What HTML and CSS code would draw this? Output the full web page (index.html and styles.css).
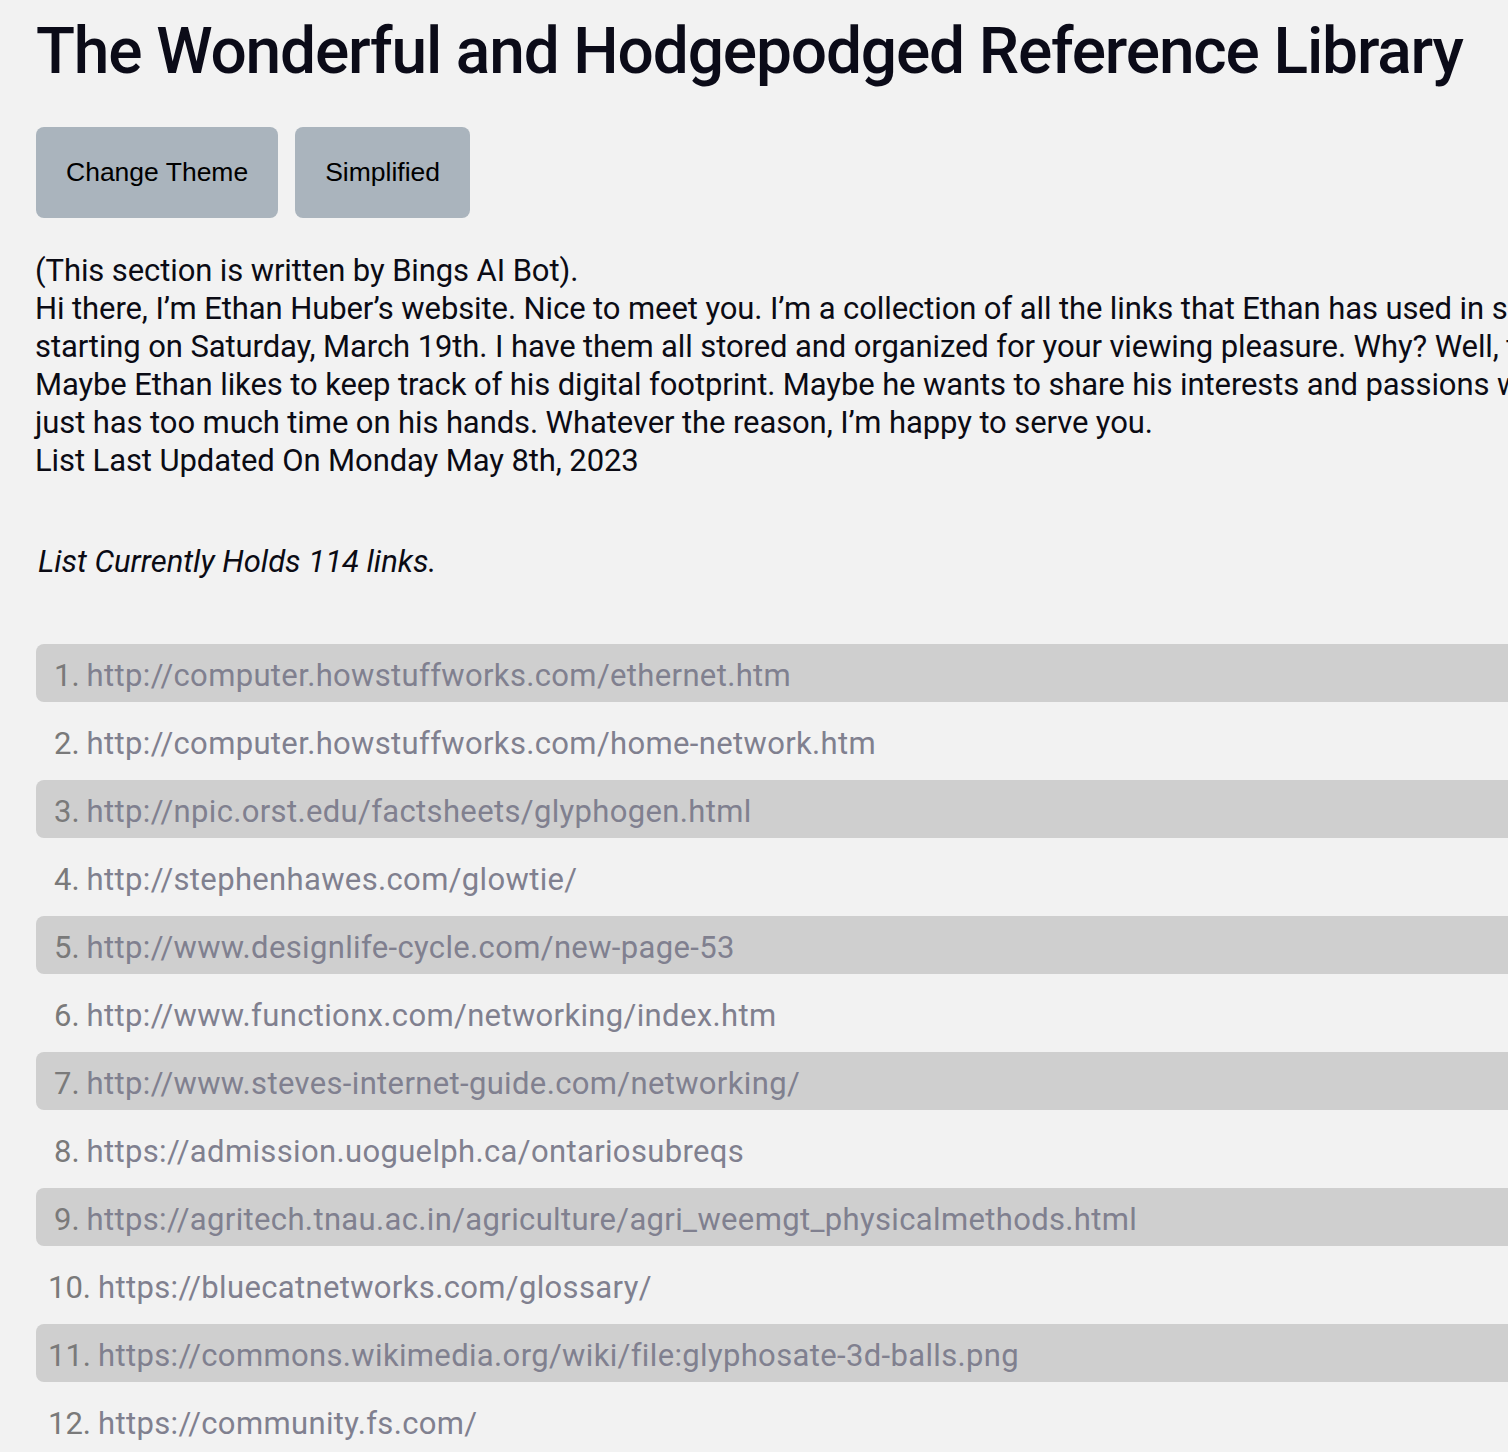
FILE: index.html
```html
<!DOCTYPE html>
<html lang="en">
<head>
<meta charset="utf-8">
<title>The Wonderful and Hodgepodged Reference Library</title>
<link rel="stylesheet" href="styles.css">
</head>
<body>
<div class="page">
  <h1 class="title">The Wonderful and Hodgepodged Reference Library</h1>
  <div class="actions">
    <button class="btn">Change Theme</button>
    <button class="btn">Simplified</button>
  </div>
  <p class="intro">(This section is written by Bings AI Bot).<br>Hi there, I’m Ethan Huber’s website. Nice to meet you. I’m a collection of all the links that Ethan has used in school,<br>starting on Saturday, March 19th. I have them all stored and organized for your viewing pleasure. Why? Well, that’s a good question.<br>Maybe Ethan likes to keep track of his digital footprint. Maybe he wants to share his interests and passions with the world. Or maybe he<br>just has too much time on his hands. Whatever the reason, I’m happy to serve you.<br>List Last Updated On Monday May 8th, 2023</p>
  <p class="count">List Currently Holds 114 links.</p>
  <ol class="links">
    <li class="row row--alt"><span class="num">1.</span><a class="link" href="#">http://computer.howstuffworks.com/ethernet.htm</a></li>
    <li class="row"><span class="num">2.</span><a class="link" href="#">http://computer.howstuffworks.com/home-network.htm</a></li>
    <li class="row row--alt"><span class="num">3.</span><a class="link" href="#">http://npic.orst.edu/factsheets/glyphogen.html</a></li>
    <li class="row"><span class="num">4.</span><a class="link" href="#">http://stephenhawes.com/glowtie/</a></li>
    <li class="row row--alt"><span class="num">5.</span><a class="link" href="#">http://www.designlife-cycle.com/new-page-53</a></li>
    <li class="row"><span class="num">6.</span><a class="link" href="#">http://www.functionx.com/networking/index.htm</a></li>
    <li class="row row--alt"><span class="num">7.</span><a class="link" href="#">http://www.steves-internet-guide.com/networking/</a></li>
    <li class="row"><span class="num">8.</span><a class="link" href="#">https://admission.uoguelph.ca/ontariosubreqs</a></li>
    <li class="row row--alt"><span class="num">9.</span><a class="link" href="#">https://agritech.tnau.ac.in/agriculture/agri_weemgt_physicalmethods.html</a></li>
    <li class="row row--wide"><span class="num">10.</span><a class="link" href="#">https://bluecatnetworks.com/glossary/</a></li>
    <li class="row row--alt row--wide"><span class="num">11.</span><a class="link" href="#">https://commons.wikimedia.org/wiki/file:glyphosate-3d-balls.png</a></li>
    <li class="row row--wide"><span class="num">12.</span><a class="link" href="#">https://community.fs.com/</a></li>
    <li class="row row--alt row--wide"><span class="num">13.</span><a class="link" href="#">https://computer.howstuffworks.com/</a></li>
  </ol>
</div>
</body>
</html>
```
FILE: styles.css
```css
html, body {
  margin: 0;
  padding: 0;
  background: #f2f2f2;
}

body {
  font-family: Roboto, "Liberation Sans", sans-serif;
  color: #0b0b16;
}

.page {
  width: 1900px;
  padding: 0 0 40px 36px;
  box-sizing: border-box;
}

.title {
  margin: 0;
  padding-top: 14px;
  font-size: 64px;
  font-weight: 500;
  line-height: 76px;
  letter-spacing: -1.15px;
  color: #0b0b18;
}

.actions {
  display: flex;
  gap: 17px;
  margin-top: 37px;
}

.btn {
  font-family: "Liberation Sans", Arial, sans-serif;
  font-size: 26.5px;
  line-height: 31px;
  padding: 30px 30px;
  border: none;
  border-radius: 8px;
  background: #aab4bd;
  color: #000;
}

.btn + .btn {
  margin-left: 0;
}

.intro {
  margin: 34px 0 0 -1px;
  font-size: 31px;
  line-height: 38px;
  letter-spacing: -0.1px;
  white-space: nowrap;
  color: #0b0b14;
}

.count {
  margin: 65px 0 0 2px;
  font-size: 31px;
  line-height: 34px;
  font-style: italic;
  color: #0b0b14;
}

.links {
  list-style: none;
  margin: 65px 0 0 0;
  padding: 0;
}

.row {
  display: flex;
  align-items: center;
  height: 58px;
  margin-bottom: 10px;
  padding-left: 18px;
  border-radius: 8px;
  font-size: 31px;
  padding-top: 4px;
  box-sizing: border-box;
}

.row--alt {
  background: #cfcfcf;
}

.row--wide {
  padding-left: 12px;
}

.num {
  color: #7a7a7a;
  margin-right: 7px;
}

.link {
  color: #80808f;
  text-decoration: none;
  letter-spacing: 0.35px;
}
```
